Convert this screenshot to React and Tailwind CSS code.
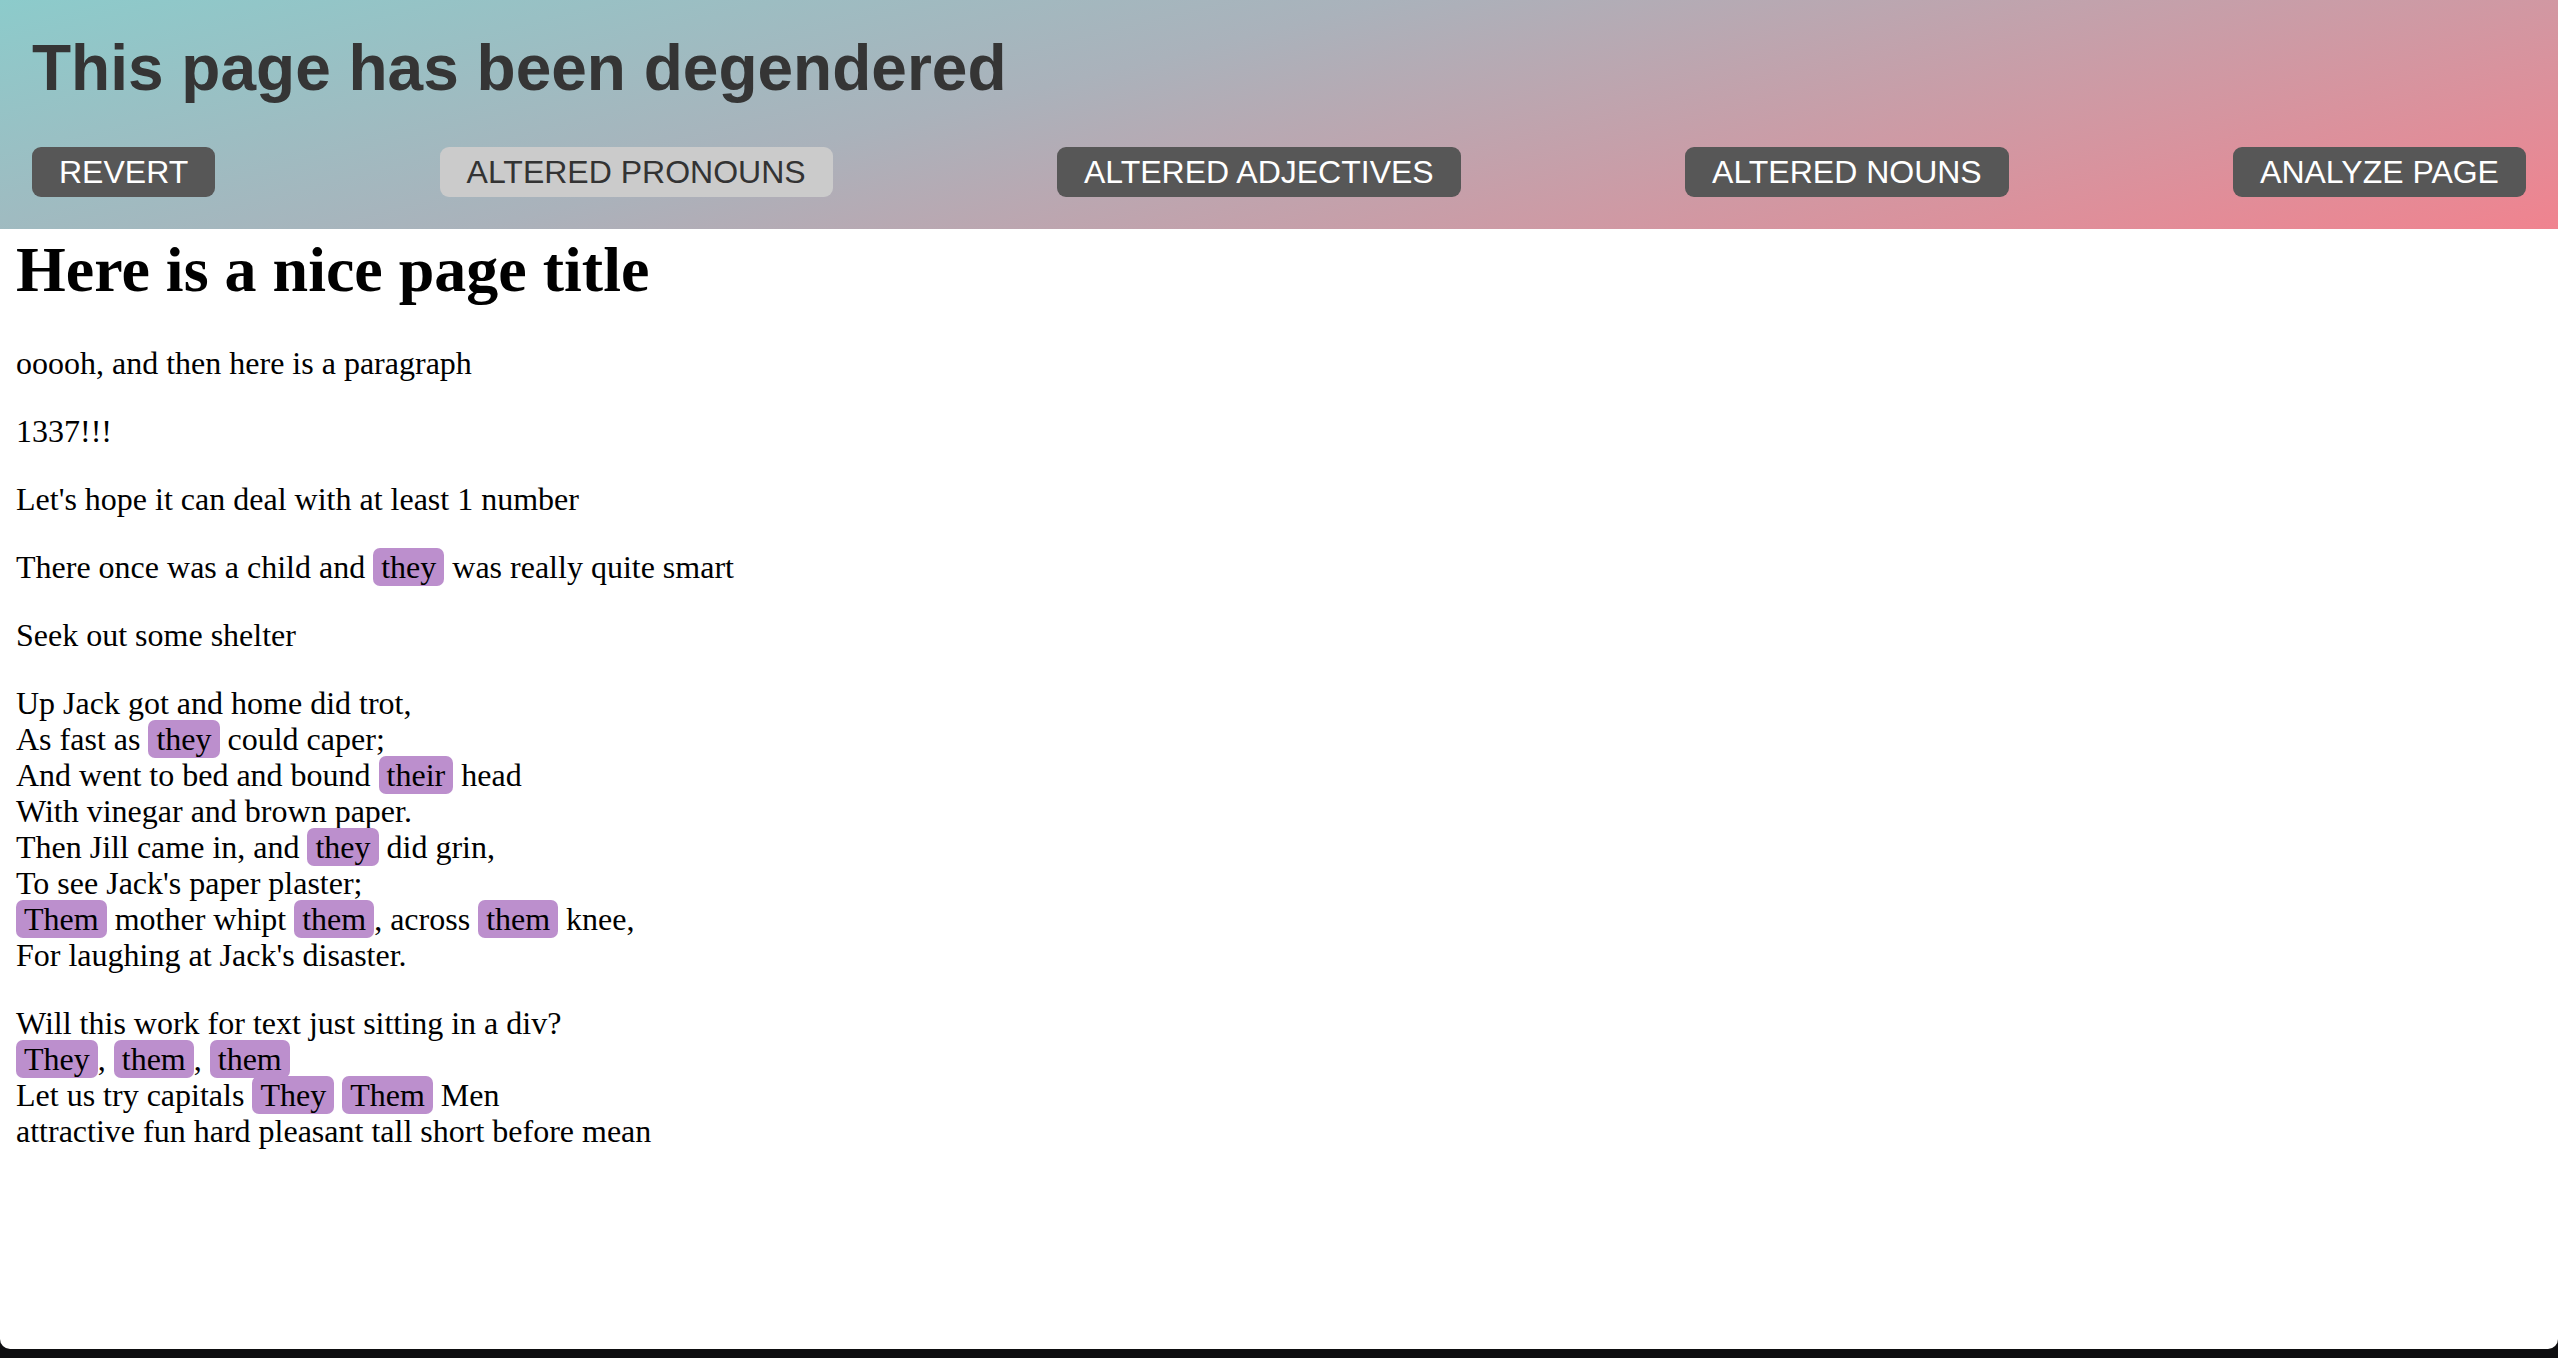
import React from 'react';

const buttons = [
    { label: 'REVERT', active: false },
    { label: 'ALTERED PRONOUNS', active: true },
    { label: 'ALTERED ADJECTIVES', active: false },
    { label: 'ALTERED NOUNS', active: false },
    { label: 'ANALYZE PAGE', active: false },
];

// highlighted (swapped) word
const Hl = ({ children }) => (
    <span className="bg-[#bc8fcd] rounded-[7px] px-[8px] py-[1px]">{children}</span>
);

const App = () => {
    return (
        <div className="h-screen flex flex-col bg-[#0e0e10]">
            <div className="flex-1 flex flex-col bg-white rounded-b-[10px] overflow-hidden">
                <header className="bg-[linear-gradient(166deg,#8ccbcb_0%,#aab2bb_40%,#f0838f_100%)] px-[32px] pt-[32px] pb-[32px] font-['Liberation_Sans',Arial,sans-serif]">
                    <h1 className="text-[64px] leading-[73px] font-bold text-[#353535]">This page has been degendered</h1>
                    <div className="mt-[42px] flex justify-between">
                        {buttons.map((b) => (
                            <button
                                key={b.label}
                                className={
                                    b.active
                                        ? 'bg-[#cbcbcb] text-[#333] text-[32px] leading-[36px] px-[27px] py-[7px] rounded-[9px]'
                                        : 'bg-[#575757] text-white text-[32px] leading-[36px] px-[27px] py-[7px] rounded-[9px]'
                                }
                            >
                                {b.label}
                            </button>
                        ))}
                    </div>
                </header>

                <main className="px-[16px] text-black text-[32px] leading-[36px] font-['Liberation_Serif','Times_New_Roman',serif]">
                    <h1 className="text-[64px] leading-[normal] font-bold mt-[4px] mb-[38px]">Here is a nice page title</h1>
                    <p className="mb-[32px]">ooooh, and then here is a paragraph</p>
                    <p className="mb-[32px]">1337!!!</p>
                    <p className="mb-[32px]">Let's hope it can deal with at least 1 number</p>
                    <p className="mb-[32px]">There once was a child and <Hl>they</Hl> was really quite smart</p>
                    <p className="mb-[32px]">Seek out some shelter</p>
                    <p className="mb-[32px]">
                        Up Jack got and home did trot,<br />
                        As fast as <Hl>they</Hl> could caper;<br />
                        And went to bed and bound <Hl>their</Hl> head<br />
                        With vinegar and brown paper.<br />
                        Then Jill came in, and <Hl>they</Hl> did grin,<br />
                        To see Jack's paper plaster;<br />
                        <Hl>Them</Hl> mother whipt <Hl>them</Hl>, across <Hl>them</Hl> knee,<br />
                        For laughing at Jack's disaster.
                    </p>
                    <div>
                        Will this work for text just sitting in a div?<br />
                        <Hl>They</Hl>, <Hl>them</Hl>, <Hl>them</Hl><br />
                        Let us try capitals <Hl>They</Hl> <Hl>Them</Hl> Men<br />
                        attractive fun hard pleasant tall short before mean
                    </div>
                </main>
            </div>
            <div className="h-[9px] shrink-0" />
        </div>
    );
};

export default App;
